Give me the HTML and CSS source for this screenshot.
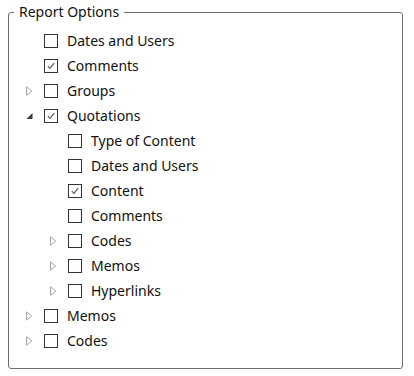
FILE: index.html
```html
<!DOCTYPE html>
<html lang="en">

<head>
    <meta charset="UTF-8">
    <title>Report Options</title>
    <link rel="stylesheet" href="styles.css">
</head>

<body>
    <fieldset class="options">
        <legend>Report Options</legend>

        <div class="row">
            <span class="arrow"></span>
            <span class="box"></span>
            <span class="label">Dates and Users</span>
        </div>
        <div class="row">
            <span class="arrow"></span>
            <span class="box checked"><svg viewBox="0 0 14 14"><path d="M3.3 7.2 L5.8 9.8 L10.7 3.6"/></svg></span>
            <span class="label">Comments</span>
        </div>
        <div class="row">
            <span class="arrow"><svg class="closed" viewBox="0 0 7 10"><path d="M0.5 0.8 L5.8 5 L0.5 9.2 Z"/></svg></span>
            <span class="box"></span>
            <span class="label">Groups</span>
        </div>
        <div class="row">
            <span class="arrow"><svg class="open" viewBox="0 0 7 10"><path d="M6.5 2 L6.5 8 L0.5 8 Z"/></svg></span>
            <span class="box checked"><svg viewBox="0 0 14 14"><path d="M3.3 7.2 L5.8 9.8 L10.7 3.6"/></svg></span>
            <span class="label">Quotations</span>
        </div>

        <!-- children of Quotations -->
        <div class="row sub">
            <span class="arrow"></span>
            <span class="box"></span>
            <span class="label">Type of Content</span>
        </div>
        <div class="row sub">
            <span class="arrow"></span>
            <span class="box"></span>
            <span class="label">Dates and Users</span>
        </div>
        <div class="row sub">
            <span class="arrow"></span>
            <span class="box checked"><svg viewBox="0 0 14 14"><path d="M3.3 7.2 L5.8 9.8 L10.7 3.6"/></svg></span>
            <span class="label">Content</span>
        </div>
        <div class="row sub">
            <span class="arrow"></span>
            <span class="box"></span>
            <span class="label">Comments</span>
        </div>
        <div class="row sub">
            <span class="arrow"><svg class="closed" viewBox="0 0 7 10"><path d="M0.5 0.8 L5.8 5 L0.5 9.2 Z"/></svg></span>
            <span class="box"></span>
            <span class="label">Codes</span>
        </div>
        <div class="row sub">
            <span class="arrow"><svg class="closed" viewBox="0 0 7 10"><path d="M0.5 0.8 L5.8 5 L0.5 9.2 Z"/></svg></span>
            <span class="box"></span>
            <span class="label">Memos</span>
        </div>
        <div class="row sub">
            <span class="arrow"><svg class="closed" viewBox="0 0 7 10"><path d="M0.5 0.8 L5.8 5 L0.5 9.2 Z"/></svg></span>
            <span class="box"></span>
            <span class="label">Hyperlinks</span>
        </div>

        <div class="row">
            <span class="arrow"><svg class="closed" viewBox="0 0 7 10"><path d="M0.5 0.8 L5.8 5 L0.5 9.2 Z"/></svg></span>
            <span class="box"></span>
            <span class="label">Memos</span>
        </div>
        <div class="row">
            <span class="arrow"><svg class="closed" viewBox="0 0 7 10"><path d="M0.5 0.8 L5.8 5 L0.5 9.2 Z"/></svg></span>
            <span class="box"></span>
            <span class="label">Codes</span>
        </div>
    </fieldset>
</body>

</html>
```

FILE: styles.css
```css
body {
    margin: 0;
    background: #fff;
    font-family: "Noto Sans", "Open Sans", sans-serif;
    font-size: 14px;
    color: #111;
}

.options {
    box-sizing: border-box;
    width: 395px;
    height: 367px;
    margin: 2px 0 0 8px;
    padding: 6px 0 0 17px;
    border: 1px solid #6e6e6e;
    border-radius: 3px;
}

.options legend {
    margin-left: -12px;
    padding: 0 5px;
    line-height: 20px;
}

.row {
    display: flex;
    align-items: center;
    height: 25px;
}

.row.sub {
    margin-left: 24px;
}

.arrow {
    width: 18px;
    height: 10px;
    flex: none;
}

.arrow svg {
    display: block;
    width: 7px;
    height: 10px;
}

.arrow .closed path {
    fill: #fff;
    stroke: #a6a6a6;
    stroke-width: 1;
}

.arrow .open path {
    fill: #3c3c3c;
}

.box {
    box-sizing: border-box;
    width: 14px;
    height: 14px;
    margin-right: 9px;
    border: 1px solid #333;
    flex: none;
}

.box svg {
    display: block;
    width: 12px;
    height: 12px;
}

.box svg path {
    fill: none;
    stroke: #5a5a5a;
    stroke-width: 1.4;
}

.label {
    white-space: nowrap;
}
```
